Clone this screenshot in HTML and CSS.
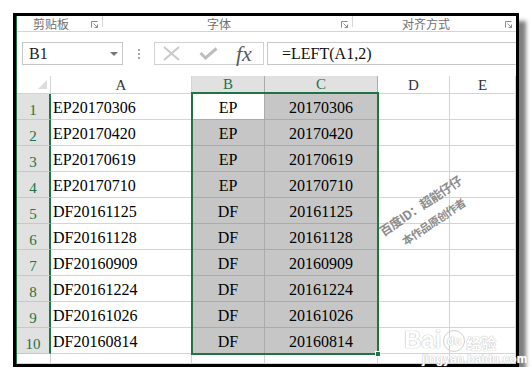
FILE: index.html
```html
<!DOCTYPE html>
<html lang="zh-CN">
<head>
    <meta charset="UTF-8">
    <title>LEFT</title>
    <link rel="stylesheet" href="styles.css">
</head>
<body>
<div class="frame">
    <div class="win">
        <div class="ribbon">
            <div class="grp grp1">
                <div class="lbl">剪贴板</div>
                <div class="launch"><svg width="8" height="7" viewBox="0 0 8 7"><path d="M0.5 6.5V0.5H6.5" stroke="#8a8a8a" fill="none"/><path d="M2.5 2.5L6.5 6.5M6.5 3.5V6.5H3.5" stroke="#8a8a8a" fill="none"/></svg></div>
            </div>
            <span class="sep"></span>
            <div class="grp grp2">
                <div class="lbl">字体</div>
                <div class="launch"><svg width="8" height="7" viewBox="0 0 8 7"><path d="M0.5 6.5V0.5H6.5" stroke="#8a8a8a" fill="none"/><path d="M2.5 2.5L6.5 6.5M6.5 3.5V6.5H3.5" stroke="#8a8a8a" fill="none"/></svg></div>
            </div>
            <span class="sep"></span>
            <div class="grp grp3">
                <div class="lbl">对齐方式</div>
                <div class="launch"><svg width="8" height="7" viewBox="0 0 8 7"><path d="M0.5 6.5V0.5H6.5" stroke="#8a8a8a" fill="none"/><path d="M2.5 2.5L6.5 6.5M6.5 3.5V6.5H3.5" stroke="#8a8a8a" fill="none"/></svg></div>
            </div>
        </div>

        <div class="fbar">
            <div class="namebox"><span>B1</span><i class="caret"></i></div>
            <div class="dots"><i></i><i></i><i></i></div>
            <div class="fxbox">
                <svg class="ico-x" width="17" height="15" viewBox="0 0 17 15"><path d="M1 1L16 14M16 1L1 14" stroke="#c9c9c9" stroke-width="2"/></svg>
                <svg class="ico-ok" width="19" height="13" viewBox="0 0 19 13"><path d="M1.5 6L6.5 11L17.5 1.5" stroke="#bdbdbd" stroke-width="3" fill="none"/></svg>
                <span class="fx">fx</span>
            </div>
            <div class="formula">=LEFT(A1,2)</div>
        </div>

        <div class="sheet">
            <div class="c corner"><svg width="9" height="9" viewBox="0 0 9 9"><path d="M9 0V9H0Z" fill="#dcdcdc"/></svg></div>
            <div class="c ch">A</div>
            <div class="c ch on">B</div>
            <div class="c ch on">C</div>
            <div class="c ch">D</div>
            <div class="c ch">E</div>

            <div class="c rh on">1</div>
            <div class="c">EP20170306</div>
            <div class="c mid s a">EP</div>
            <div class="c mid s">20170306</div>
            <div class="c"></div>
            <div class="c"></div>

            <div class="c rh on">2</div>
            <div class="c">EP20170420</div>
            <div class="c mid s">EP</div>
            <div class="c mid s">20170420</div>
            <div class="c"></div>
            <div class="c"></div>

            <div class="c rh on">3</div>
            <div class="c">EP20170619</div>
            <div class="c mid s">EP</div>
            <div class="c mid s">20170619</div>
            <div class="c"></div>
            <div class="c"></div>

            <div class="c rh on">4</div>
            <div class="c">EP20170710</div>
            <div class="c mid s">EP</div>
            <div class="c mid s">20170710</div>
            <div class="c"></div>
            <div class="c"></div>

            <div class="c rh on">5</div>
            <div class="c">DF20161125</div>
            <div class="c mid s">DF</div>
            <div class="c mid s">20161125</div>
            <div class="c"></div>
            <div class="c"></div>

            <div class="c rh on">6</div>
            <div class="c">DF20161128</div>
            <div class="c mid s">DF</div>
            <div class="c mid s">20161128</div>
            <div class="c"></div>
            <div class="c"></div>

            <div class="c rh on">7</div>
            <div class="c">DF20160909</div>
            <div class="c mid s">DF</div>
            <div class="c mid s">20160909</div>
            <div class="c"></div>
            <div class="c"></div>

            <div class="c rh on">8</div>
            <div class="c">DF20161224</div>
            <div class="c mid s">DF</div>
            <div class="c mid s">20161224</div>
            <div class="c"></div>
            <div class="c"></div>

            <div class="c rh on">9</div>
            <div class="c">DF20161026</div>
            <div class="c mid s">DF</div>
            <div class="c mid s">20161026</div>
            <div class="c"></div>
            <div class="c"></div>

            <div class="c rh on">10</div>
            <div class="c">DF20160814</div>
            <div class="c mid s">DF</div>
            <div class="c mid s">20160814</div>
            <div class="c"></div>
            <div class="c"></div>

            <div class="c rh"></div>
            <div class="c"></div>
            <div class="c"></div>
            <div class="c"></div>
            <div class="c"></div>
            <div class="c"></div>
        </div>
    </div>

    <!-- selection B1:C10 -->
    <div class="selbox"><i class="handle"></i></div>

    <div class="wm">
        <div class="wm1">百度ID：超能仔仔</div>
        <div class="wm2">本作品原创作者</div>
    </div>

    <div class="bd">
        <div class="bd-top"><span class="bai">Bai</span><span class="paw">du</span><span class="jy">经验</span></div>
        <div class="bd-url">jingyan.baidu.com</div>
    </div>
</div>
</body>
</html>
```

FILE: styles.css
```css
* {
    margin: 0;
    padding: 0;
    box-sizing: border-box;
}

body {
    background: #fff;
    font-family: "Liberation Serif", serif;
}

.frame {
    position: relative;
    margin: 13px 0 0 13px;
    width: 506px;
    height: 354px;
    border: 3px solid #000;
    box-shadow: 7px 8px 4px rgba(0, 0, 0, .5);
}

.win {
    height: 100%;
    border-left: 1px solid #217346;
    display: flex;
    flex-direction: column;
    background: #fff;
}

/* ribbon group labels */
.ribbon {
    height: 16px;
    border-bottom: 1px solid #d4d4d4;
    display: flex;
    align-items: flex-start;
}

.grp {
    display: flex;
}

.grp1 {
    width: 85px;
}

.grp2 {
    width: 249px;
}

.grp3 {
    flex: 1;
}

.lbl {
    flex: 1;
    text-align: center;
    padding-top: 1px;
    font: 12px/14px "Noto Sans CJK SC", sans-serif;
    color: #707070;
}

.launch {
    width: 17px;
    padding: 5px 0 0 6px;
}

.launch svg {
    display: block;
}

.sep {
    width: 1px;
    height: 11px;
    background: #d6d6d6;
}

/* formula bar */
.fbar {
    height: 44px;
    display: flex;
    align-items: flex-start;
    padding: 10px 0 0 5px;
}

.namebox {
    width: 101px;
    height: 23px;
    border: 1px solid #c6c6c6;
    display: flex;
    align-items: center;
    padding: 0 4px 0 6px;
    font-size: 16px;
    color: #222;
}

.caret {
    margin-left: auto;
    border-left: 4px solid transparent;
    border-right: 4px solid transparent;
    border-top: 4px solid #777;
}

.dots {
    width: 31px;
    display: flex;
    flex-direction: column;
    align-items: center;
    gap: 2px;
    padding-top: 7px;
}

.dots i {
    width: 2px;
    height: 2px;
    background: #a8a8a8;
}

.fxbox {
    width: 110px;
    height: 23px;
    border: 1px solid #d0d0d0;
    display: flex;
    align-items: center;
}

.ico-x {
    margin-left: 8px;
}

.ico-ok {
    margin-left: 19px;
}

.fx {
    margin-left: 18px;
    font: italic 22px/21px "Liberation Serif", serif;
    color: #5a5a5a;
}

.formula {
    flex: 1;
    height: 23px;
    margin-left: 3px;
    border: 1px solid #c6c6c6;
    border-right: 0;
    padding-left: 14px;
    display: flex;
    align-items: center;
    font-size: 16px;
    color: #111;
}

/* grid */
.sheet {
    display: grid;
    grid-template-columns: 34px 141px 73px 113px 72px 66px;
    grid-template-rows: 18px repeat(10, 26px) 10px;
}

.c {
    border-right: 1px solid #d4d4d4;
    border-bottom: 1px solid #d4d4d4;
    display: flex;
    align-items: flex-end;
    padding: 0 2px 3px;
    font-size: 16px;
    line-height: 16px;
    color: #000;
    white-space: nowrap;
}

.mid {
    justify-content: center;
}

.corner {
    justify-content: flex-end;
    padding: 0 3px 4px 0;
}

.corner svg {
    display: block;
}

.ch {
    justify-content: center;
    padding-bottom: 0;
    font-size: 15px;
    color: #333;
}

.ch.on {
    background: #e1e1e1;
    color: #217346;
    border-right-color: #ababab;
    border-bottom: 2px solid #217346;
}

.rh {
    justify-content: center;
    padding-bottom: 1px;
    font-size: 15px;
}

.rh.on {
    background: #e1e1e1;
    color: #217346;
    border-right: 2px solid #217346;
    border-bottom-color: #c8c8c8;
}

.s {
    background: #c6c6c6;
    border-color: #ababab;
}

.s.a {
    background: #fff;
}

.selbox {
    position: absolute;
    left: 175px;
    top: 76px;
    width: 188px;
    height: 263px;
    border: 2px solid #217346;
}

.handle {
    position: absolute;
    left: 182px;
    top: 257px;
    width: 6px;
    height: 6px;
    background: #217346;
    border: 1px solid #fff;
}

/* watermark */
.wm {
    position: absolute;
    left: 352px;
    top: 178px;
    width: 116px;
    height: 40px;
    transform: rotate(-34deg);
    text-align: center;
    font-family: "Noto Sans CJK SC", sans-serif;
    font-weight: 700;
    color: #8c8c8c;
    line-height: 20px;
    letter-spacing: -0.5px;
}

.wm1 {
    font-size: 12.5px;
}

.wm2 {
    font-size: 11px;
    padding-left: 4px;
}

.bd {
    position: absolute;
    left: 388px;
    top: 312px;
    color: #fff;
    text-shadow: 0 0 1px #b8b8b8, 0 0 1px #b8b8b8;
}

.bd-top {
    display: flex;
    align-items: flex-end;
    height: 24px;
}

.bai {
    font: 700 24px/24px "Liberation Sans", sans-serif;
}

.paw {
    width: 22px;
    height: 22px;
    margin: 0 1px 0 2px;
    border: 1px solid #d0d0d0;
    border-radius: 50%;
    display: flex;
    align-items: center;
    justify-content: center;
    font: 700 12px/12px "Liberation Sans", sans-serif;
}

.jy {
    font: 700 15px/18px "Noto Sans CJK SC", sans-serif;
}

.bd-url {
    margin: 1px 0 0 18px;
    font: 700 12px/12px "Liberation Sans", sans-serif;
}
```
